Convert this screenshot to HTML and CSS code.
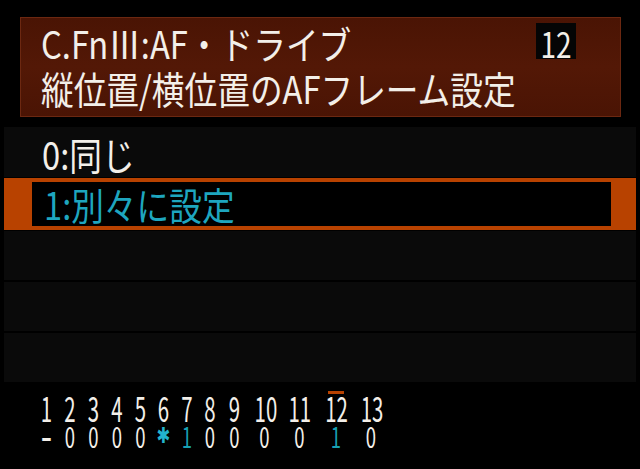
FILE: index.html
```html
<!DOCTYPE html>
<html lang="ja">
<head>
<meta charset="utf-8">
<title>C.Fn III</title>
<link rel="stylesheet" href="styles.css">
</head>
<body>
<div class="screen">
  <header class="head">
    <div class="line l1">
      <span class="sx">C.FnⅢ:AF・ドライブ</span>
      <span class="badge"><span class="badge-t">12</span></span>
    </div>
    <div class="line l2"><span class="sx">縦位置/横位置のAFフレーム設定</span></div>
  </header>
  <ul class="menu">
    <li class="row r0"><span class="sx">0:同じ</span></li>
    <li class="row sel"><div class="sel-in"><span class="sx">1:別々に設定</span></div></li>
    <li class="row"></li>
    <li class="row"></li>
    <li class="row"></li>
  </ul>
  <div class="status">
    <span class="mk"></span><span class="mk"></span><span class="mk"></span><span class="mk"></span><span class="mk"></span><span class="mk"></span><span class="mk"></span><span class="mk"></span><span class="mk"></span><span class="mk"></span><span class="mk"></span><span class="mk on"></span><span class="mk"></span>
    <span class="lb"><i>1</i></span><span class="lb"><i>2</i></span><span class="lb"><i>3</i></span><span class="lb"><i>4</i></span><span class="lb"><i>5</i></span><span class="lb"><i>6</i></span><span class="lb"><i>7</i></span><span class="lb"><i>8</i></span><span class="lb"><i>9</i></span><span class="lb"><i>10</i></span><span class="lb"><i>11</i></span><span class="lb"><i>12</i></span><span class="lb"><i>13</i></span>
    <span class="vl"><i class="dash">-</i></span><span class="vl"><i>0</i></span><span class="vl"><i>0</i></span><span class="vl"><i>0</i></span><span class="vl"><i>0</i></span><span class="vl"><i class="ast">✱</i></span><span class="vl"><i class="cy">1</i></span><span class="vl"><i>0</i></span><span class="vl"><i>0</i></span><span class="vl"><i>0</i></span><span class="vl"><i>0</i></span><span class="vl"><i class="cy">1</i></span><span class="vl"><i>0</i></span>
  </div>
</div>
</body>
</html>
```
FILE: styles.css
```css
html, body {
  margin: 0;
  padding: 0;
  background: #000;
}
body {
  width: 640px;
  height: 469px;
  overflow: hidden;
  font-family: "Noto Sans CJK JP", "Noto Sans", sans-serif;
  color: #f3efe9;
}
.screen {
  padding-top: 17px;
}
.head {
  box-sizing: border-box;
  margin: 0 19px 0 20px;
  height: 100px;
  border: 1px solid #6c2811;
  background: linear-gradient(180deg, #4a1404 0%, #531806 50%, #4a1404 100%);
  padding: 2px 0 6px 20px;
}
.line {
  height: 45px;
  line-height: 45px;
  font-size: 38px;
  white-space: nowrap;
}
.l1 {
  display: flex;
  justify-content: space-between;
  align-items: flex-start;
}
.sx {
  display: inline-block;
  transform: scaleX(0.86);
  transform-origin: left center;
}
.badge {
  margin-top: 3px;
  margin-right: 44px;
  width: 40px;
  height: 36px;
  background: #050505;
  line-height: 36px;
  font-size: 35px;
}
.badge-t {
  display: block;
  text-align: center;
  transform: scaleX(0.8) translateY(2px);
}
.menu {
  list-style: none;
  margin: 10px 4px 0 4px;
  padding: 0;
  display: flex;
  flex-direction: column;
  gap: 2px;
}
.row {
  box-sizing: border-box;
  height: 49px;
  background: #0a0a0a;
  font-size: 38px;
  white-space: nowrap;
}
.r0 {
  height: 50px;
  padding: 4px 0 0 38px;
  line-height: 46px;
  margin-bottom: -1px;
}
.sel {
  height: 52px;
  background: #b84200;
  padding: 4px 25px 4px 28px;
  margin-bottom: -1px;
}
.sel-in {
  height: 100%;
  background: #000;
  padding-left: 12px;
  line-height: 44px;
  color: #1ea6bf;
}
.status {
  margin: 8px 0 0 35px;
  display: grid;
  grid-template-columns: 23px 24px 23px 24px 23px 23px 24px 22px 27px 33px 37px 36px 34px;
  grid-template-rows: 4px 28px 26px;
  width: max-content;
}
.mk.on {
  justify-self: center;
  align-self: end;
  width: 16px;
  height: 3px;
  background: #b84200;
}
.lb, .vl {
  text-align: center;
  white-space: nowrap;
}
.lb {
  font-size: 34px;
  line-height: 28px;
  height: 28px;
}
.vl {
  font-size: 28px;
  line-height: 24px;
  height: 24px;
  margin-top: 2px;
}
.lb i, .vl i {
  font-style: normal;
  display: block;
  transform: scaleX(0.6);
}
.vl i {
  transform: scaleX(0.66);
}
.vl i.cy {
  color: #17a2b4;
}
.vl i.dash {
  font-weight: 700;
  transform: scaleX(1.1);
}
.vl i.ast {
  font-family: "DejaVu Sans", sans-serif;
  font-size: 22px;
  color: #22b4cc;
  transform: scaleX(0.75);
}
```
